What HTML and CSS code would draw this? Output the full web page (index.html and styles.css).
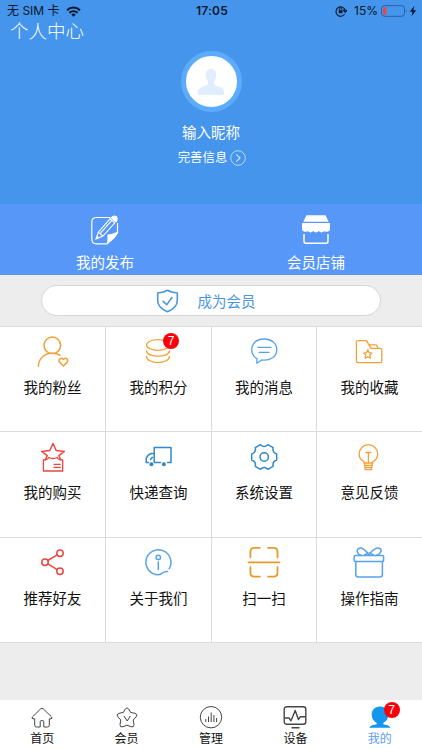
FILE: index.html
```
<!DOCTYPE html>
<html lang="zh-CN">
<head>
  <meta charset="UTF-8" />
  <meta name="viewport" content="width=device-width, initial-scale=1.0" />
  <title>个人中心</title>
  <link rel="stylesheet" href="styles.css">
</head>
<body>
  <header class="header">
    <div class="status">
      <div class="status-left">
        <span>无 SIM 卡</span>
        <svg width="15" height="11" viewBox="0 0 15 11" fill="none" stroke="#07182b" stroke-width="2">
          <path d="M1 4.2C4.8 .6 10.2 .6 14 4.2M3.4 6.8C5.8 4.6 9.2 4.6 11.6 6.8" />
          <path d="M5.3 8.4Q7.5 6.8 9.7 8.4L7.5 10.8Z" fill="#07182b" stroke="none" />
        </svg>
      </div>
      <div class="status-time">17:05</div>
      <div class="status-right">
        <svg width="12" height="12" viewBox="0 0 12 12" fill="none" stroke="#07182b" stroke-width="1.1">
          <path d="M9.6 9.3A4.7 4.7 0 1 1 10.2 5.2M8.6 5.3H11.8L10.2 7.3Z" />
          <rect x="3.7" y="5.2" width="3.8" height="3" fill="#07182b" stroke="none" />
          <path d="M4.4 5.4V4.2A1.2 1.2 0 0 1 6.8 4.2V5.4" stroke-width=".9" />
        </svg>
        <span class="percent">15%</span>
        <svg width="36" height="12" viewBox="0 0 36 12">
          <rect x=".5" y=".7" width="23" height="10.6" rx="3" fill="none" stroke="#2b5f9c" />
          <path d="M2 3.7Q2 2.2 3.5 2.2H5.3V9.8H3.5Q2 9.8 2 8.3Z" fill="#ee4343" />
          <path d="M25 4.2Q26.6 6 25 7.8Z" fill="#2b5f9c" />
          <path d="M33.4 .8L28.8 6.7H31.6L30.6 11.2L35.1 5.2H32.3Z" fill="#07182b" />
        </svg>
      </div>
    </div>
    <h1 class="title">个人中心</h1>
    <div class="profile">
      <div class="avatar">
        <svg width="28" height="28" viewBox="0 0 28 28" fill="#dfedfd">
          <path d="M14 1C17.5 1 19.3 3.5 19 7C19.6 8 19 9.7 18.4 10.2C18.1 12 17.5 12.7 17 13.3V16.2C19 18.5 27 18.5 27 24V27H1V24C1 18.5 9 18.5 11 16.2V13.3C10.5 12.7 9.9 12 9.6 10.2C9 9.7 8.4 8 9 7C8.7 3.5 10.5 1 14 1Z" />
        </svg>
      </div>
      <div class="nickname">输入昵称</div>
      <div class="more">
        <span>完善信息</span>
        <svg width="16" height="16" viewBox="0 0 16 16" fill="none" stroke="#d5e8fd">
          <circle cx="8" cy="8" r="7.3" stroke-width=".8" />
          <path d="M6.3 4.3L10 8L6.3 11.7" stroke-width="1.1" />
        </svg>
      </div>
    </div>
    <nav class="band">
      <a class="band-item">
        <svg width="30" height="32" viewBox="0 0 30 32" fill="none" stroke="#fff">
          <path d="M20.5 3.5H6.5Q1.8 3.5 1.8 8V25Q1.8 29.8 6.5 29.8H17L27.5 19V9" stroke-width="1.2" />
          <path d="M17 30Q17.6 24 17.5 20.5Q23 20 28 17.5Q26.5 24.5 17 30Z" fill="#fff" stroke="none" />
          <path d="M6 25L8.3 18.2L20 4.8L24.8 8.8L13 22ZM8.3 18.2L13 22M10.7 18.8L22 6.2" stroke-width="1.1" />
          <path d="M6 25L7.2 21.6L9 23.5Z" fill="#fff" stroke="none" />
          <path d="M20.8 4.2C21.8 .6 27.5 .3 27.7 4.5Q27.9 7 26 8.5Z" fill="#fff" stroke="none" />
        </svg>
        <span>我的发布</span>
      </a>
      <a class="band-item">
        <svg width="30" height="32" viewBox="0 0 30 32">
          <path d="M5.5 1.2H24.5L27.7 7.7H2.3Z" fill="#fff" />
          <path d="M1 9H29V15.5A3.5 3.5 0 0 1 23.4 17A3.5 3.5 0 0 1 17.8 17A3.5 3.5 0 0 1 12.2 17A3.5 3.5 0 0 1 6.6 17A3.5 3.5 0 0 1 1 15.5Z" fill="#fff" />
          <path d="M3 20V27.2Q3 29.2 5 29.2H25Q27 29.2 27 27.2V20" fill="none" stroke="#fff" stroke-width="1.5" />
        </svg>
        <span>会员店铺</span>
      </a>
    </nav>
  </header>

  <main class="content">
    <a class="join">
      <svg width="23" height="24" viewBox="0 0 23 24" fill="none" stroke="#4b97de" stroke-width="1.6" stroke-linejoin="round">
        <path d="M11.5 1.2Q15 3.6 21.3 4V11.5C21.3 17 17 20.5 11.5 22.8C6 20.5 1.7 17 1.7 11.5V4Q8 3.6 11.5 1.2Z" />
        <path d="M6.7 11.8L10.8 15.6L16.3 8" />
      </svg>
      <span>成为会员</span>
    </a>

    <section class="grid">
      <a class="cell">
        <svg class="icon orange" viewBox="0 0 41 36">
          <circle cx="20.3" cy="13.3" r="8.3" />
          <path d="M6.3 34.3C7 25.5 13 21.2 20 21.2C23.2 21.2 26 21.8 28 23.4" />
          <path d="M31.4 34L28 30.6C25.6 28 28.6 24.5 31.4 27.4C34.2 24.5 37.2 28 34.8 30.6Z" />
        </svg>
        <span>我的粉丝</span>
      </a>
      <a class="cell">
        <svg class="icon orange thin" viewBox="0 0 41 36">
          <ellipse cx="20" cy="13" rx="11.5" ry="5.3" />
          <path d="M8.4 18.8C9.5 26 30.5 26 31.6 18.8M8.4 24.3C9.5 32.6 30.5 32.6 31.6 24.3" />
        </svg>
        <span>我的积分</span>
        <b class="badge badge-cell">7</b>
      </a>
      <a class="cell">
        <svg class="icon blue thin" viewBox="0 0 41 36">
          <path d="M12.8 31.2L13 26.6C4.4 22.2 6 7 20.2 7C27.8 7 32.8 11.7 32.8 17.6C32.8 25.3 25.5 29 17.6 28Z" />
          <path d="M14 15.3H27M15 20.3H25" />
        </svg>
        <span>我的消息</span>
      </a>
      <a class="cell">
        <svg class="icon orange thin" viewBox="0 0 41 36">
          <path d="M9 8.6H17.5L22 16.4H31.2Q32.8 16.4 32.8 18V29Q32.8 30.6 31.2 30.6H9Q7.4 30.6 7.4 29V10.2Q7.4 8.6 9 8.6Z" />
          <path d="M20.3 12.8H26.5Q28.3 12.8 28.7 16.2" />
          <path d="M18.8 17.8L20.1 20.7L23 21.1L20.8 23.1L21.4 26.2L18.8 24.7L16.2 26.2L16.8 23.1L14.6 21.1L17.5 20.7Z" />
        </svg>
        <span>我的收藏</span>
      </a>
      <a class="cell">
        <svg class="icon red" viewBox="0 0 41 36">
          <path d="M13.3 22.8L15.2 18.6L9.6 14.4L17.8 13.5L21 6.5L24.2 13.5L32.4 14.4L26.8 18.6L28.7 22.8" />
          <path d="M13.2 22.8H11.4V34H30.7V22.8H28.8M13.2 22.8Q16.5 22.3 16.8 20.5Q21 22.5 25.2 20.5Q25.5 22.3 28.8 22.8M22 27.3H28.3M22 30.3H28.3" stroke-width="1.3" />
        </svg>
        <span>我的购买</span>
      </a>
      <a class="cell">
        <svg class="icon deep" viewBox="0 0 41 36">
          <path d="M22.5 25.4H16.2V10.4H33V25.4H29.5M16 16.5H13.3Q9.5 17.6 8.2 21.5V25.4H10.5M12.4 22.5L14.4 20.2" />
          <circle class="solid" cx="13.4" cy="27.2" r="1.3" />
          <circle class="solid" cx="25.8" cy="27.2" r="1.3" />
        </svg>
        <span>快递查询</span>
      </a>
      <a class="cell">
        <svg class="icon deep" viewBox="0 0 41 36">
          <path transform="translate(20.2 20)" d="M12.5 -3V3Q7.9 4.6 8.9 9.3L3.7 12.3Q0 8.6 -3.7 12.3L-8.9 9.3Q-7.9 4.6 -12.5 3V-3Q-7.9 -4.6 -8.9 -9.3L-3.7 -12.3Q0 -8.6 3.7 -12.3L8.9 -9.3Q7.9 -4.6 12.5 -3Z" />
          <circle cx="20.2" cy="20" r="4.2" />
        </svg>
        <span>系统设置</span>
      </a>
      <a class="cell">
        <svg class="icon orange thin" viewBox="0 0 41 36">
          <path d="M15 26V24.8C11.8 23 10.1 20.3 10.1 17A9.3 9.3 0 0 1 28.7 17C28.7 20.3 27 23 23.8 24.8V26Z" />
          <path d="M17 15.5H21.8M19.4 15.5V25.5M15.4 26L16.2 32.6H22.6L23.4 26M15.8 28.3H23M16.2 30.5H22.6" />
        </svg>
        <span>意见反馈</span>
      </a>
      <a class="cell">
        <svg class="icon red" viewBox="0 0 41 36">
          <circle cx="13" cy="19.2" r="3.2" />
          <circle cx="28" cy="10.2" r="3.2" />
          <circle cx="28" cy="28.3" r="3.2" />
          <path d="M15.8 17.5L25.2 11.8M15.8 20.9L25.2 26.7" />
        </svg>
        <span>推荐好友</span>
      </a>
      <a class="cell">
        <svg class="icon blue" viewBox="0 0 41 36">
          <path d="M31.1 25.8A12.5 12.5 0 1 0 20.3 31.8Q22.8 31.8 24.6 29.8Q26.2 28.2 29.6 28.4" />
          <circle cx="20.3" cy="14.4" r="2.2" />
          <path d="M20.3 19V26.5" />
        </svg>
        <span>关于我们</span>
      </a>
      <a class="cell">
        <svg class="icon gold" viewBox="0 0 41 36">
          <path d="M6.4 14.4V8.7Q6.4 4.8 10.3 4.8H15.8M24 4.8H29.6Q33.5 4.8 33.5 8.7V14.4M6.4 24.2V29.7Q6.4 33.6 10.3 33.6H15.8M24 33.6H29.6Q33.5 33.6 33.5 29.7V24.2M4.5 19.3H35.5" />
        </svg>
        <span>扫一扫</span>
      </a>
      <a class="cell">
        <svg class="icon blue" viewBox="0 0 41 36">
          <rect x="5.2" y="12.5" width="29.4" height="6" rx="1" />
          <path d="M6.8 18.5V31.5Q6.8 34 9.3 34H31Q33.4 34 33.4 31.5V18.5" />
          <path d="M19.8 12.2C17 6.8 12 3.6 9.2 5.8C6.8 8 9 11.5 12 12.2M19.8 12.2C22.8 6.8 28.5 3.6 31.3 5.8C33.6 8 30.5 11.5 27.5 12.2M15.5 12.2L19 9.8M24.5 12.2L20.8 9.8" />
        </svg>
        <span>操作指南</span>
      </a>
    </section>
  </main>

  <footer class="tabbar">
    <a class="tab">
      <svg class="tab-icon" viewBox="0 0 24 24">
        <path d="M10.2 22V16.5Q10.2 15.7 11 15.7H13Q13.8 15.7 13.8 16.5V22H17.5Q19.3 22 19.3 20.2V13.8H21Q22.8 13.6 21.6 12L13.3 3.8Q12 2.6 10.7 3.8L2.4 12Q1.2 13.6 3 13.8H4.7V20.2Q4.7 22 6.5 22Z" />
      </svg>
      <span>首页</span>
    </a>
    <a class="tab">
      <svg class="tab-icon" viewBox="0 0 24 24">
        <path d="M10.3 4Q12 1.6 13.7 4L15.6 7.4L20 8.3Q23.3 9.3 21.2 11.8L18.2 15L19 19.6Q19.1 22.7 16.2 21.8L12 20.2L7.8 21.8Q4.9 22.7 5 19.6L5.8 15L2.8 11.8Q.7 9.3 4 8.3L8.4 7.4Z" />
        <path d="M9 11L12.2 16L15.4 11" />
      </svg>
      <span>会员</span>
    </a>
    <a class="tab">
      <svg class="tab-icon" viewBox="0 0 24 24">
        <circle cx="12" cy="12.2" r="10.7" />
        <path d="M6.8 14V17M9.5 11.5V17M12.2 7.5V17M14.9 10V17M17.6 13V17" />
      </svg>
      <span>管理</span>
    </a>
    <a class="tab">
      <svg class="tab-icon tab-icon-bold" viewBox="0 0 24 24">
        <rect x="1.2" y="1.8" width="21.6" height="17.4" rx="2.5" />
        <path d="M2 13H6L8 15.8L12.2 5.5L15.4 14.5L17.4 11.7H22M8.5 22.8H16.5" />
      </svg>
      <span>设备</span>
    </a>
    <a class="tab active">
      <svg class="tab-icon" viewBox="0 0 24 24">
        <path class="person" d="M12 1.5C17.5 1.5 20.3 5.3 20.3 9.8C20.3 13.8 18 16.5 15.3 18V19.2C17.5 20 22 20.2 22.4 22.7H1.4C1.8 20.2 6.5 20 8.7 19.2V18C6 16.5 3.7 13.8 3.7 9.8C3.7 5.3 6.5 1.5 12 1.5Z" />
      </svg>
      <span>我的</span>
      <b class="badge badge-tab">7</b>
    </a>
  </footer>
</body>
</html>
```
FILE: styles.css
```
* {
  box-sizing: border-box;
}
body {
  margin: 0;
  height: 750px;
  display: flex;
  flex-direction: column;
  overflow: hidden;
  font-family: "Liberation Sans", "Noto Sans CJK SC", sans-serif;
  font-size: 14.5px;
  color: #111;
  background-color: #ededed;
}
svg {
  display: block;
  flex: none;
}
.header {
  height: 275px;
  display: flex;
  flex-direction: column;
  background-color: #4595ec;
  color: #fff;
}

/* status bar */
.status {
  height: 21px;
  padding: 1px 5px 0 7px;
  display: grid;
  grid-template-columns: 1fr auto 1fr;
  align-items: center;
  font-family: Inter, "Noto Sans CJK SC", sans-serif;
  font-size: 12px;
  line-height: 20px;
  color: #07182b;
}
.status-left, .status-right {
  display: flex;
  align-items: center;
  gap: 6px;
}
.status-right {
  justify-content: flex-end;
}
.percent {
  margin: 0 -3px 0 1px;
}
.status-time {
  font-weight: 600;
  letter-spacing: 0.2px;
}

.title {
  margin: 0;
  padding: 1px 0 0 10px;
  font-size: 18.5px;
  font-weight: 300;
  line-height: 20px;
}
.profile {
  flex: 1;
  padding-top: 9px;
  display: flex;
  flex-direction: column;
  align-items: center;
}
.avatar {
  width: 61px;
  height: 61px;
  border: 5.5px solid #5cacfb;
  border-radius: 50%;
  background-color: #fff;
  display: flex;
  align-items: center;
  justify-content: center;
}
.nickname {
  margin-top: 10px;
  line-height: 22px;
}
.more {
  margin-top: 6px;
  padding-left: 2px;
  display: flex;
  align-items: center;
  gap: 3px;
  font-size: 12.4px;
  line-height: 16px;
}

.band {
  height: 71px;
  display: grid;
  grid-template-columns: 1fr 1fr;
  background-color: #5797f8;
}
.band-item {
  padding: 10px 1px 0 0;
  display: flex;
  flex-direction: column;
  align-items: center;
}
.band-item span {
  margin-top: 7px;
  line-height: 20px;
}

.content {
  flex: 1;
}
.join {
  width: 340px;
  height: 31px;
  margin: 10px auto;
  border: 1px solid #d6d6d6;
  border-radius: 16px;
  background-color: #fff;
  color: #4b97de;
  display: flex;
  align-items: center;
  justify-content: center;
  gap: 19px;
  padding-right: 11px;
}

/* menu, the gaps show through as divider lines */
.grid {
  display: grid;
  grid-template-columns: 105px 105px 104px 105px;
  grid-template-rows: 104px 105px 104px;
  gap: 1px;
  padding: 1px 0;
  background-color: #dcdcdc;
}
.cell {
  position: relative;
  padding-top: 5px;
  display: flex;
  flex-direction: column;
  align-items: center;
  background-color: #fff;
}
.cell span {
  margin-top: 10px;
  line-height: 20px;
}
.icon {
  width: 41px;
  height: 36px;
  fill: none;
  stroke: currentColor;
  stroke-width: 1.5;
  stroke-linecap: round;
  stroke-linejoin: round;
}
.thin {
  stroke-width: 1.3;
}
.solid {
  fill: currentColor;
}
.orange {
  color: #f3a03a;
}
.gold {
  color: #e79a2c;
  stroke-width: 1.8;
}
.blue {
  color: #56a3ea;
}
.deep {
  color: #3189c9;
}
.red {
  color: #ec4640;
}

.badge {
  position: absolute;
  width: 16px;
  height: 16px;
  border-radius: 50%;
  background-color: #fb0007;
  color: #fff;
  font-size: 12px;
  font-weight: normal;
  line-height: 16px;
  text-align: center;
}
.badge-cell {
  top: 6px;
  left: 57px;
}
.badge-tab {
  top: 2px;
  left: 46px;
}

.tabbar {
  height: 50px;
  display: grid;
  grid-template-columns: repeat(5, 1fr);
  background-color: #fff;
  font-size: 12px;
}
.tab {
  position: relative;
  padding-top: 5px;
  display: flex;
  flex-direction: column;
  align-items: center;
}
.tab span {
  margin-top: 1px;
  line-height: 18px;
}
.tab-icon {
  width: 24px;
  height: 24px;
  fill: none;
  stroke: #444;
  stroke-width: 1;
  stroke-linejoin: round;
}
.tab-icon-bold {
  stroke-width: 1.4;
}
.person {
  fill: #1296ee;
  stroke: none;
}
.active {
  color: #5b9df0;
}
```
